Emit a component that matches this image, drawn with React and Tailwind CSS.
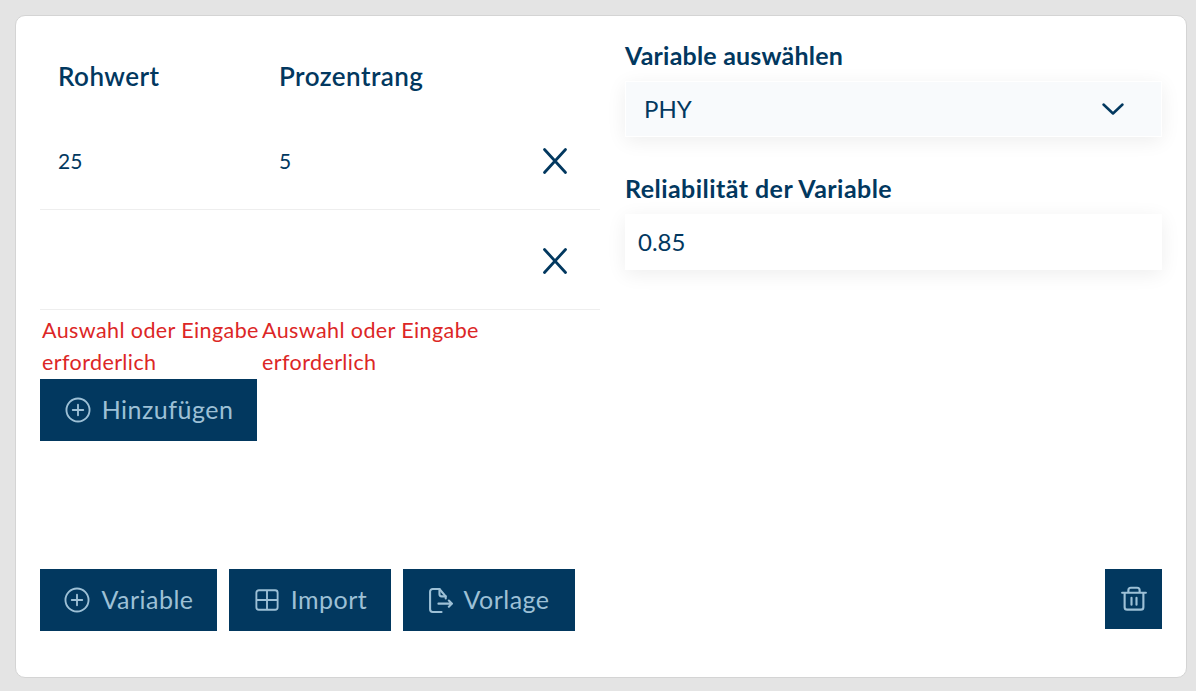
import React from "react";

const Svg = ({ size = 24, w, h, vb = "0 0 24 24", sw = 1.5, children, className = "" }) => (
  <svg
    width={w || size}
    height={h || size}
    viewBox={vb}
    fill="none"
    stroke="currentColor"
    strokeWidth={sw}
    strokeLinecap="round"
    strokeLinejoin="round"
    className={`shrink-0 ${className}`}
  >
    {children}
  </svg>
);

const PlusCircle = () => (
  <Svg size={28} sw={1.6}>
    <circle cx="12" cy="12" r="9.9" />
    <path d="M12 7.5v9M7.5 12h9" />
  </Svg>
);
const TableIcon = () => (
  <Svg size={30} sw={1.5} className="-mx-[1px]">
    <path d="M3.5 6.2a2 2 0 0 1 2-2h13a2 2 0 0 1 2 2v11.6a2 2 0 0 1-2 2h-13a2 2 0 0 1-2-2zM3.5 12h17M12 4.2v15.6" />
  </Svg>
);
const FileExport = () => (
  <Svg size={25} sw={2}>
    <path d="M11 1v5a2 2 0 0 0 2 2h4" />
    <path d="M17 10V8l-6-7H4.5A2.5 2.5 0 0 0 2 3.5v17A2.5 2.5 0 0 0 4.5 23H13" />
    <path d="M10 15h13M20 12l3 3l-3 3" />
  </Svg>
);
const TrashIcon = () => (
  <Svg size={30} sw={1.7}>
    <path d="M2.5 7h19M4.5 7v11.5a2 2 0 0 0 2 2h11a2 2 0 0 0 2-2V7M7.5 7V5a2 2 0 0 1 2-2h5a2 2 0 0 1 2 2v2M10 11v5.5M14 11v5.5" />
  </Svg>
);
const CloseIcon = () => (
  <Svg w={26} h={28} vb="0 0 26 28" sw={2.8} className="mr-[32px] mt-[2px] text-[#02385f]">
    <path d="M2.5 2.5l21 23M23.5 2.5l-21 23" />
  </Svg>
);

function Btn({ icon: Icon, label, className }) {
  return (
    <button className={`h-[62px] bg-[#02385f] text-[#9dc0d6] flex items-center justify-center gap-[10px] text-[25px] tracking-[0.5px] ${className}`}>
      <Icon />
      <span>{label}</span>
    </button>
  );
}

function Row({ a, b }) {
  return (
    <div className="h-[100px] border-b border-[#eeeeee] flex items-center text-[21px] text-[#02385f]">
      <div className="w-[239px] pl-[18px] mt-[2px]">{a}</div>
      <div className="flex-1 mt-[2px]">{b}</div>
      <CloseIcon />
    </div>
  );
}

export default function App() {
  return (
    <div className="h-[691px] w-[1196px] bg-[#e4e4e4] p-[15px] font-['Lato','Liberation_Sans',sans-serif] overflow-hidden">
      <div className="h-[663px] w-[1172px] bg-white rounded-[10px] border border-[#d4d4d4] pl-[24px] pr-[23px] pt-[23px] pb-[46px] flex gap-[25px] text-[#02385f]">
        <div className="w-[560px] flex flex-col">
          <div className="h-[71px] pt-[4px] flex items-center text-[26px] font-semibold tracking-[0.45px]">
            <div className="w-[239px] pl-[18px]">Rohwert</div>
            <div>Prozentrang</div>
          </div>
          <Row a="25" b="5" />
          <Row a="" b="" />
          <div className="flex pt-[4px] pb-[1px] text-[21.5px] leading-[32px] text-[#dc2626] tracking-[0.4px]">
            <div className="w-[220px] pl-[2px]">Auswahl oder Eingabe erforderlich</div>
            <div className="w-[220px] pl-[2px]">Auswahl oder Eingabe erforderlich</div>
          </div>
          <Btn icon={PlusCircle} label="Hinzufügen" className="w-[217px]" />
          <div className="mt-auto flex gap-[12px]">
            <Btn icon={PlusCircle} label="Variable" className="w-[177px]" />
            <Btn icon={TableIcon} label="Import" className="w-[162px]" />
            <Btn icon={FileExport} label="Vorlage" className="w-[172px]" />
          </div>
        </div>
        <div className="w-[537px] flex flex-col">
          <div className="h-[42px] pb-[10px] flex items-center text-[25px] font-bold leading-none tracking-[0.2px]">Variable auswählen</div>
          <div className="h-[56px] bg-[#f8fafc] border border-white shadow-[0_4px_20px_rgba(0,0,0,0.07)] flex items-center justify-between pl-[18px] pr-[35px] text-[24px]">
            <span>PHY</span>
            <Svg w={26} h={16} vb="0 0 26 16" sw={2.5}>
              <path d="M3.5 3.5L13 12.5L22.5 3.5" />
            </Svg>
          </div>
          <div className="h-[77px] pb-[8px] flex items-end text-[25px] font-bold leading-[36px] tracking-[0.45px]">Reliabilität der Variable</div>
          <div className="h-[56px] bg-white shadow-[0_4px_20px_rgba(0,0,0,0.07)] flex items-center pl-[13px] text-[24px]">0.85</div>
          <div className="mt-auto self-end h-[60px] w-[57px] mb-[2px] bg-[#02385f] text-[#9dc0d6] flex items-center justify-center">
            <TrashIcon />
          </div>
        </div>
      </div>
    </div>
  );
}
